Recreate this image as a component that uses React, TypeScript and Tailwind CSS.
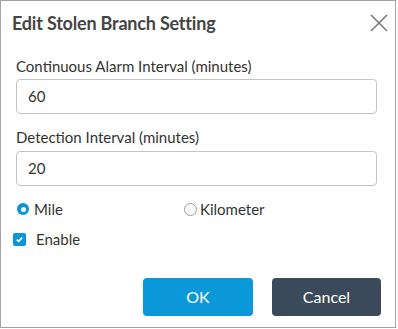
import React from "react";

export default function App() {
  return (
    <div className="w-[398px] h-[329px] bg-white" style={{ fontFamily: "Lato, 'Open Sans', sans-serif" }}>
      <div className="w-[396px] h-[328px] border border-[#a3a3a3] flex flex-col">
        <div className="flex items-center justify-between h-[44px] pl-[11px] pr-[6px]">
          <div className="text-[18px] font-bold text-[#454545] tracking-[-0.2px]">Edit Stolen Branch Setting</div>
          <svg width="20" height="20" viewBox="0 0 20 20" className="mr-[0px]">
            <path d="M2 2 L18 18 M18 2 L2 18" stroke="#7b7b7b" strokeWidth="1.6" fill="none" />
          </svg>
        </div>
        <div className="flex flex-col px-[15px] pt-[12px]">
          <div className="text-[15px] text-[#333] leading-[18px]">Continuous Alarm Interval (minutes)</div>
          <div className="mt-[4px] h-[35px] w-[361px] border border-[#c4c4c4] rounded-[4px] flex items-center px-[11px] text-[15px] text-[#333]">60</div>
          <div className="mt-[14px] text-[15px] text-[#333] leading-[18px]">Detection Interval (minutes)</div>
          <div className="mt-[5px] h-[35px] w-[361px] border border-[#c4c4c4] rounded-[4px] flex items-center px-[11px] text-[15px] text-[#333]">20</div>
          <div className="mt-[14px] flex items-center h-[18px]">
            <div className="w-[168px] flex items-center">
              <span className="w-[12px] h-[12px] rounded-full bg-[#0a95da] flex items-center justify-center ml-[1px]">
                <span className="w-[5px] h-[5px] rounded-full bg-white" />
              </span>
              <span className="ml-[5px] text-[15px] text-[#333]">Mile</span>
            </div>
            <div className="flex items-center">
              <span className="w-[13px] h-[13px] rounded-full border border-[#9a9a9a] bg-white" />
              <span className="ml-[3px] text-[15px] text-[#333]">Kilometer</span>
            </div>
          </div>
          <div className="mt-[12px] flex items-center h-[18px] -ml-[3px]">
            <span className="w-[13px] h-[13px] rounded-[2px] bg-[#0a95da] flex items-center justify-center">
              <svg width="9" height="9" viewBox="0 0 9 9">
                <path d="M1.8 4.6 L3.7 6.4 L7.2 2.6" stroke="white" strokeWidth="1.6" fill="none" />
              </svg>
            </span>
            <span className="ml-[10px] text-[15px] text-[#333]">Enable</span>
          </div>
        </div>
        <div className="mt-auto mb-[11px] flex justify-end gap-[19px] pr-[14px]">
          <button className="w-[110px] h-[38px] rounded-[4px] bg-[#0b98d8] text-white text-[16px]">OK</button>
          <button className="w-[109px] h-[38px] rounded-[4px] bg-[#3b4a5b] text-white text-[16px]">Cancel</button>
        </div>
      </div>
    </div>
  );
}
